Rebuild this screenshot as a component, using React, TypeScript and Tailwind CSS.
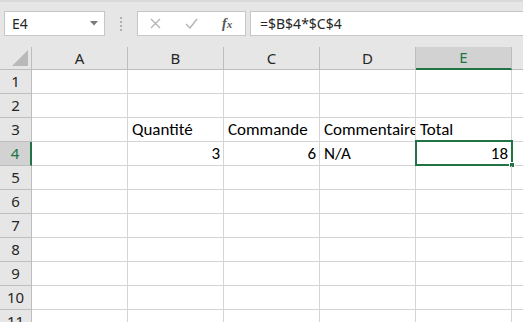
import React from 'react';

const cols = ['A', 'B', 'C', 'D', 'E'];
const rowCount = 11;

type Cell = { text: string; align?: 'left' | 'right' };

const data: Record<string, Cell> = {
  B3: { text: 'Quantité' },
  C3: { text: 'Commande' },
  D3: { text: 'Commentaire' },
  E3: { text: 'Total' },
  B4: { text: '3', align: 'right' },
  C4: { text: '6', align: 'right' },
  D4: { text: 'N/A' },
  E4: { text: '18', align: 'right' },
};

const cellFont = { fontFamily: 'Carlito, Lato, "Liberation Sans", sans-serif' };
const uiFont = { fontFamily: '"Noto Sans", "Open Sans", "DejaVu Sans", sans-serif' };

const FormulaBar = () => (
  <div className="h-[47px] bg-[#e6e6e6] border-t-2 border-[#dadada] flex items-start pt-[9px] pl-[4px]" style={uiFont}>
    <div className="w-[101px] h-[25px] bg-white border border-[#c6c6c6] flex items-center justify-between pl-[7px] pr-[6px] text-[14px] text-[#262626]">
      <span>E4</span>
      <svg width="8" height="5" viewBox="0 0 8 5"><path d="M0 0h8L4 4.5z" fill="#7a7a7a" /></svg>
    </div>
    <div className="w-[32px] h-[25px] flex flex-col items-center justify-center gap-[2px]">
      {[0, 1, 2, 3].map(i => <div key={i} className="w-[2px] h-[2px] bg-[#b0b0b0]" />)}
    </div>
    <div className="w-[109px] h-[25px] bg-white border border-[#c6c6c6] flex items-center">
      <div className="w-[36px] flex justify-center">
        <svg width="11" height="11" viewBox="0 0 11 11"><path d="M1 1l9 9M10 1l-9 9" stroke="#b3b3b3" strokeWidth="1.3" /></svg>
      </div>
      <div className="w-[36px] flex justify-center">
        <svg width="13" height="11" viewBox="0 0 13 11"><path d="M1 6l4 4 7-9" stroke="#b3b3b3" strokeWidth="1.4" fill="none" /></svg>
      </div>
      <div className="w-[36px] flex justify-center items-baseline italic text-[#555] font-bold" style={{ fontFamily: '"Liberation Serif", serif' }}>
        <span className="text-[14px]">f</span>
        <span className="text-[11px]">x</span>
      </div>
    </div>
    <div className="flex-1 h-[25px] bg-white border border-[#c6c6c6] border-r-0 ml-[4px] flex items-center pl-[9px] text-[14px] text-[#262626]">
      =$B$4*$C$4
    </div>
  </div>
);

export default function App() {
  const rows = Array.from({ length: rowCount }, (_, i) => i + 1);
  return (
    <div className="w-[523px] h-[322px] overflow-hidden bg-white">
      <FormulaBar />
      <div className="grid grid-cols-[32px_96px_96px_96px_96px_96px_1fr] auto-rows-[24px] [grid-template-rows:23px]">
        {/* header row */}
        <div className="bg-[#e6e6e6] border-r border-b border-[#bdbdbd] relative overflow-hidden">
          <svg className="absolute right-[3px] bottom-[3px]" width="16" height="16" viewBox="0 0 16 16"><path d="M16 0V16H0z" fill="#b9b9b9" /></svg>
        </div>
        {cols.map(c => (
          <div
            key={c}
            style={uiFont}
            className={
              c === 'E'
                ? 'bg-[#d2d2d2] border-r border-[#bdbdbd] border-b-2 border-b-[#217346] text-[#217346] flex items-center justify-center text-[15px]'
                : 'bg-[#e6e6e6] border-r border-b border-[#bdbdbd] text-[#262626] flex items-center justify-center text-[15px]'
            }
          >
            {c}
          </div>
        ))}
        <div className="bg-[#e6e6e6] border-b border-[#bdbdbd]" />

        {rows.map(r => (
          <React.Fragment key={r}>
            <div
              style={uiFont}
              className={
                r === 4
                  ? 'bg-[#d2d2d2] border-r-2 border-r-[#217346] border-b border-[#bdbdbd] text-[#217346] flex items-center justify-center text-[15px]'
                  : 'bg-[#e6e6e6] border-r border-b border-[#bdbdbd] text-[#262626] flex items-center justify-center text-[15px]'
              }
            >
              {r}
            </div>
            {cols.map(c => {
              const id = `${c}${r}`;
              const cell = data[id];
              const selected = id === 'E4';
              return (
                <div
                  key={id}
                  style={cellFont}
                  className={`relative border-r border-b border-[#d4d4d4] flex items-end pb-[3px] text-[17px] text-black whitespace-nowrap ${
                    cell?.align === 'right' ? 'justify-end pr-[3px]' : 'pl-[4px]'
                  } ${selected ? 'overflow-visible' : 'overflow-hidden'}`}
                >
                  {cell && <span className="leading-none">{cell.text}</span>}
                  {selected && (
                    <div className="absolute -top-[2px] -left-[1px] w-[98px] h-[26px] border-2 border-[#217346]">
                      <div className="absolute -right-[4px] -bottom-[4px] w-[6px] h-[6px] bg-[#217346] border border-white" />
                    </div>
                  )}
                </div>
              );
            })}
            <div className="border-b border-[#d4d4d4]" />
          </React.Fragment>
        ))}
      </div>
    </div>
  );
}
